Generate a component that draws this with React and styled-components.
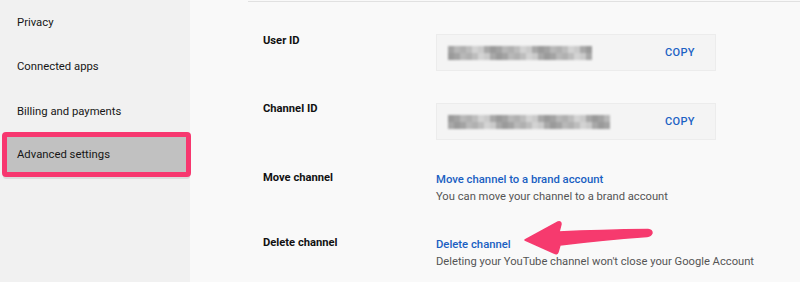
import React from 'react';
import styled, { createGlobalStyle } from 'styled-components';

const Global = createGlobalStyle`
  html, body { margin: 0; padding: 0; background: #f9f9f9; }
  body { font-family: Roboto, "Liberation Sans", Arial, sans-serif; }
`;

const Page = styled.div`
  display: flex;
  width: 800px;
  height: 282px;
  overflow: hidden;
`;

const Sidebar = styled.nav`
  width: 190px;
  flex: none;
  background: #f1f1f1;
  display: flex;
  flex-direction: column;
  position: relative;
  z-index: 1;
`;

const NavItem = styled.div`
  height: 44.5px;
  display: flex;
  align-items: center;
  padding-left: 17px;
  font-size: 11.3px;
  color: #161616;
  box-sizing: border-box;
`;

const ActiveItem = styled(NavItem)`
  margin: -2px 0 0 2px;
  width: 189px;
  height: 45px;
  padding-left: 10px;
  background: #c1c1c1;
  border: 5px solid #f7376f;
  border-radius: 4px;
  box-shadow: 0 3px 0 -1px #dcdcdc;
`;

const Main = styled.main`
  flex: 1;
  position: relative;
  background: #f9f9f9;
`;

const Divider = styled.div`
  margin: 1px 0 0 58px;
  height: 1px;
  background: #e1e1e1;
`;

const Rows = styled.div`
  padding: 31px 0 0 73px;
`;

const Row = styled.div`
  display: grid;
  grid-template-columns: 173px 360px;
  height: ${p => p.h}px;
`;

const Label = styled.div`
  font-size: 11.2px;
  font-weight: 700;
  line-height: 16px;
  color: #111;
`;

const IdBox = styled.div`
  margin-top: ${p => p.top || 1}px;
  width: 280px;
  height: 35px;
  box-sizing: content-box;
  display: flex;
  align-items: center;
  justify-content: space-between;
  padding: 0 20px 0 11px;
  margin-right: 0;
  background: #f4f4f4;
  border: 1px solid #ececec;
  box-sizing: border-box;
  height: 37px;
`;

const Blur = styled.div`
  display: grid;
  grid-template-columns: repeat(${p => p.cols}, 6px);
  grid-auto-rows: 7px;
  filter: blur(1px);
`;

const Cell = styled.div`
  background: ${p => p.shade};
`;

const Copy = styled.span`
  font-size: 11px;
  font-weight: 500;
  letter-spacing: 0.4px;
  color: #1c62c4;
`;

const Value = styled.div`
  display: flex;
  flex-direction: column;
  margin-top: 1px;
`;

const LinkText = styled.a`
  font-size: 11.3px;
  font-weight: 500;
  line-height: 17px;
  color: #1a5fc2;
  text-decoration: none;
`;

const Hint = styled.div`
  font-size: 11.2px;
  line-height: 17px;
  color: #555;
  white-space: nowrap;
`;

const Arrow = styled.svg`
  position: absolute;
  left: 0;
  top: 0;
  width: 610px;
  height: 282px;
  pointer-events: none;
`;

const shades = ['#bdbdbd', '#a3a3a3', '#cacaca', '#b0b0b0', '#9a9a9a', '#d3d3d3', '#b8b8b8', '#a8a8a8'];

const Pixels = ({ cols, seed }) => {
  const cells = [];
  for (let r = 0; r < 2; r++) {
    for (let c = 0; c < cols; c++) {
      cells.push(<Cell key={r + '-' + c} shade={shades[(c * 5 + r * 3 + seed) % shades.length]} />);
    }
  }
  return <Blur cols={cols}>{cells}</Blur>;
};

export default function App() {
  return (
    <Page>
      <Global />
      <Sidebar>
        <NavItem>Privacy</NavItem>
        <NavItem>Connected apps</NavItem>
        <NavItem>Billing and payments</NavItem>
        <ActiveItem>Advanced settings</ActiveItem>
      </Sidebar>
      <Main>
        <Divider />
        <Rows>
          <Row h={68}>
            <Label>User ID</Label>
            <IdBox>
              <Pixels cols={24} seed={1} />
              <Copy>COPY</Copy>
            </IdBox>
          </Row>
          <Row h={69}>
            <Label>Channel ID</Label>
            <IdBox top={2}>
              <Pixels cols={27} seed={4} />
              <Copy>COPY</Copy>
            </IdBox>
          </Row>
          <Row h={65}>
            <Label>Move channel</Label>
            <Value>
              <LinkText>Move channel to a brand account</LinkText>
              <Hint>You can move your channel to a brand account</Hint>
            </Value>
          </Row>
          <Row h={48}>
            <Label>Delete channel</Label>
            <Value>
              <LinkText>Delete channel</LinkText>
              <Hint>Deleting your YouTube channel won't close your Google Account</Hint>
            </Value>
          </Row>
        </Rows>
        <Arrow viewBox="190 0 610 282">
          <path
            d="M525 240 L558 222 Q561 221 561 224 L559 232 Q600 230 648 229.5 Q652 230 652 233 Q651 236 647 236.5 Q600 240 560 245 L558 252 Q557 255 554 253 Z"
            fill="#f63a6e"
            stroke="#f63a6e"
            strokeWidth="1.5"
            strokeLinejoin="round"
          />
        </Arrow>
      </Main>
    </Page>
  );
}
